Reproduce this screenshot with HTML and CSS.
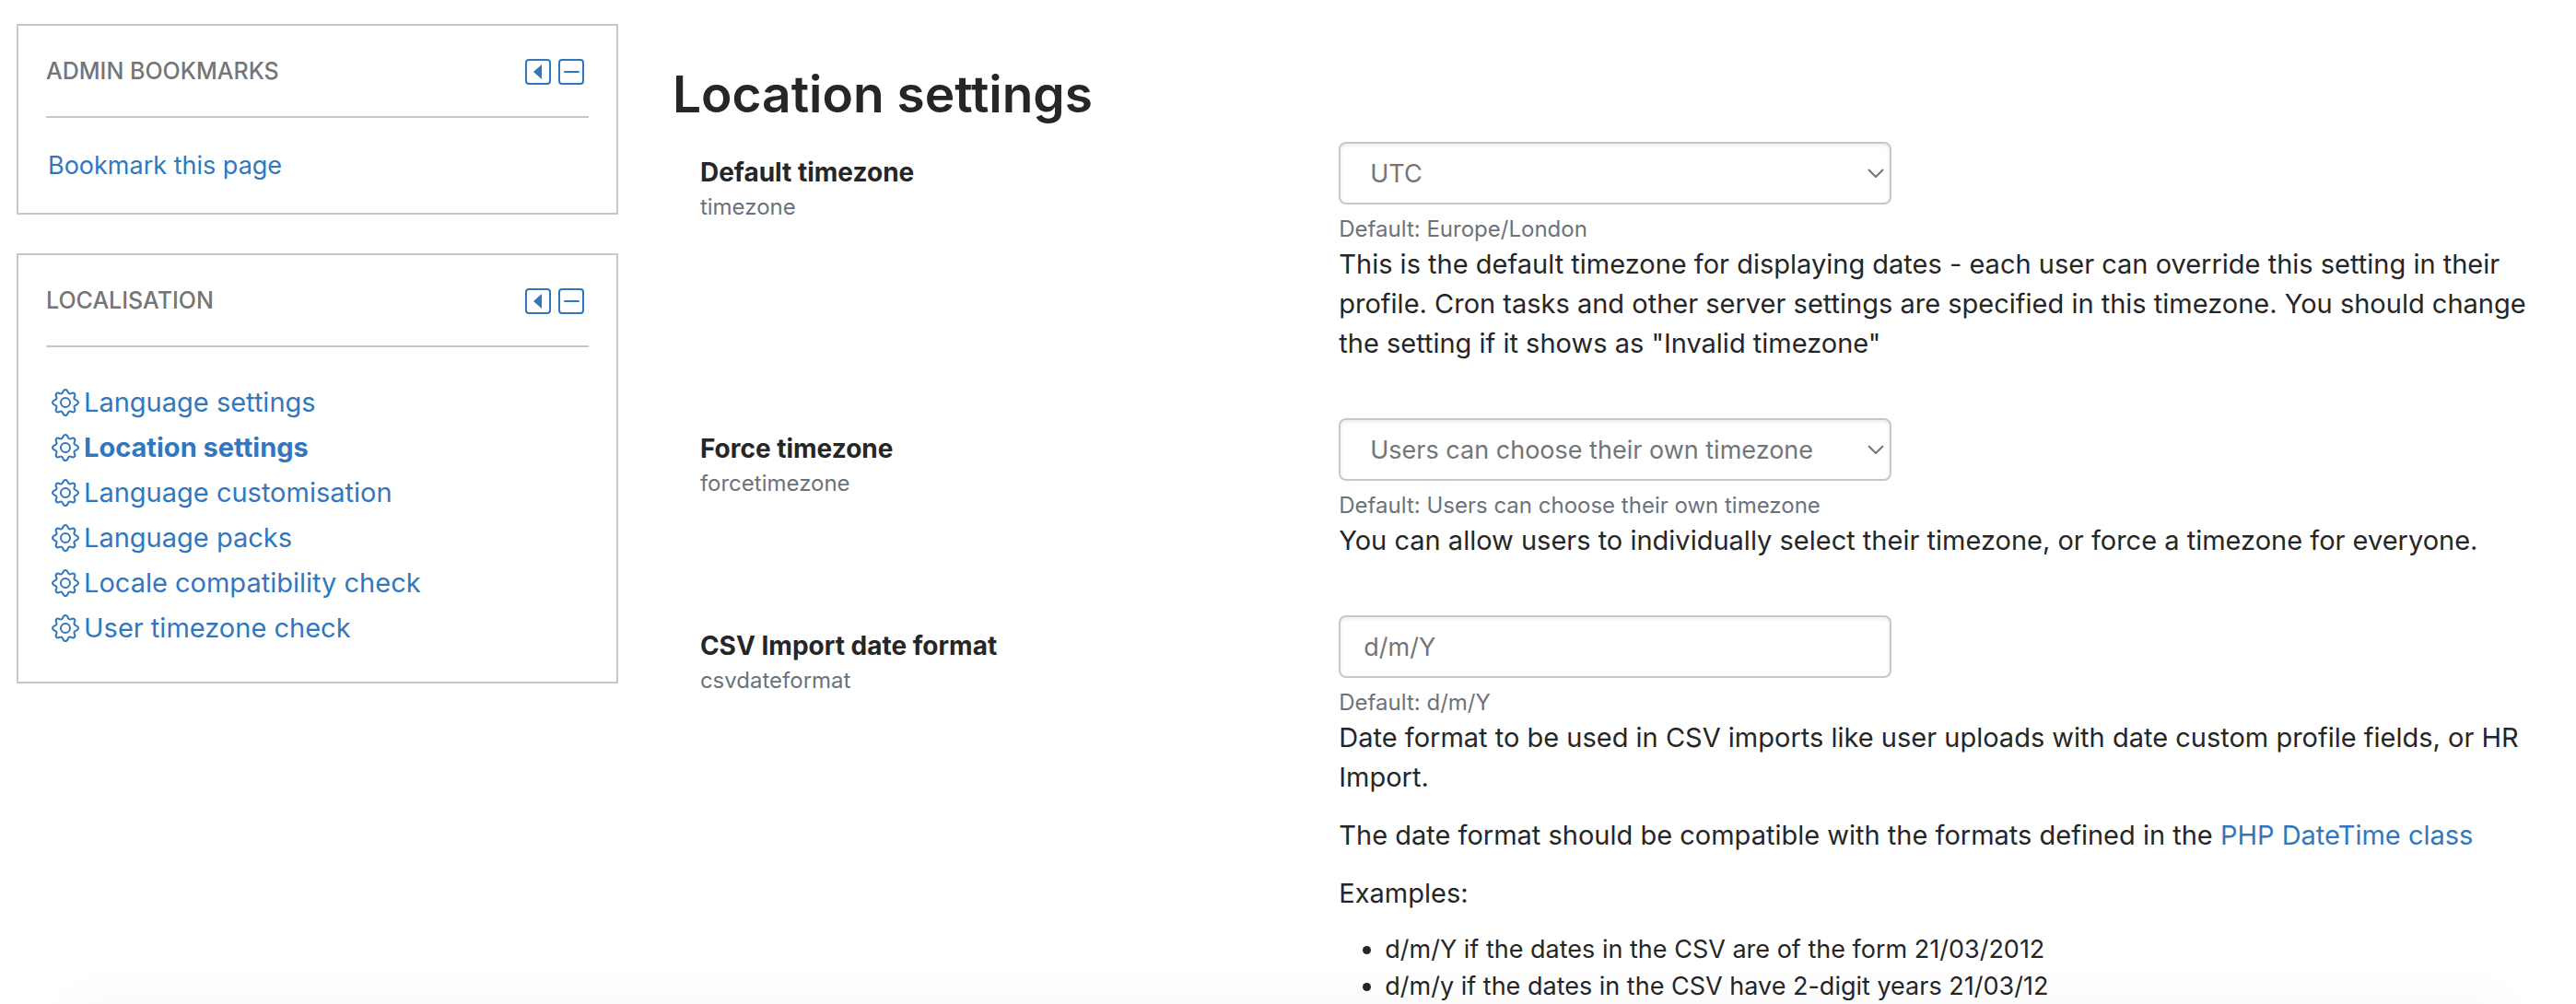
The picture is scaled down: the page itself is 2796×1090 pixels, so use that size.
FILE: index.html
```html
<!DOCTYPE html>
<html lang="en">
  <head>
    <meta charset="UTF-8" />
    <meta name="viewport" content="width=device-width, initial-scale=1.0" />
    <title>Location settings</title>
    <link rel="stylesheet" href="styles.css">
  </head>
  <body>
    <!-- shared icons -->
    <svg class="sprite" aria-hidden="true">
      <symbol id="icon-dock" viewBox="0 0 28 28">
        <rect x="1" y="1" width="26" height="26" rx="3" fill="none" stroke="currentColor" stroke-width="2" />
        <path d="M18 6v16L9 14z" fill="currentColor" />
      </symbol>
      <symbol id="icon-collapse" viewBox="0 0 28 28">
        <rect x="1" y="1" width="26" height="26" rx="3" fill="none" stroke="currentColor" stroke-width="2" />
        <path d="M7 14h15" fill="none" stroke="currentColor" stroke-width="2" stroke-linecap="round" />
      </symbol>
      <symbol id="icon-cog" viewBox="0 0 30 30">
        <g fill="none" stroke="currentColor" stroke-width="2" stroke-linejoin="round">
          <circle cx="15" cy="15" r="5" />
          <path d="M15 1C17 1 17.600 3.200 18.200 4.400C18.800 5.600 20 5.800 21.200 5.200C22.400 4.600 23.800 4.200 24.800 5.200C25.800 6.200 25.400 7.600 24.800 8.800C24.200 10 24.400 11.200 25.600 11.800C26.800 12.400 29 13 29 15C29 17 26.800 17.600 25.600 18.200C24.400 18.800 24.200 20 24.800 21.200C25.400 22.400 25.800 23.800 24.800 24.800C23.800 25.800 22.400 25.400 21.200 24.800C20 24.200 18.800 24.400 18.200 25.600C17.600 26.800 17 29 15 29C13 29 12.400 26.800 11.800 25.600C11.200 24.400 10 24.200 8.800 24.800C7.600 25.400 6.200 25.800 5.200 24.800C4.200 23.800 4.600 22.400 5.200 21.200C5.800 20 5.600 18.800 4.400 18.200C3.200 17.600 1 17 1 15C1 13 3.200 12.400 4.400 11.800C5.600 11.200 5.800 10 5.200 8.800C4.600 7.600 4.200 6.200 5.200 5.200C6.200 4.200 7.600 4.600 8.800 5.200C10 5.800 11.200 5.600 11.800 4.400C12.400 3.200 13 1 15 1Z" />
        </g>
      </symbol>
    </svg>

    <div class="page">
      <aside class="sidebar">
        <section class="block">
          <header class="block__header">
            <h2 class="block__title">Admin bookmarks</h2>
            <button class="block__btn" aria-label="Dock Admin bookmarks"><svg><use href="#icon-dock" /></svg></button>
            <button class="block__btn" aria-label="Collapse Admin bookmarks"><svg><use href="#icon-collapse" /></svg></button>
          </header>
          <a class="block__link" href="#">Bookmark this page</a>
        </section>

        <section class="block">
          <header class="block__header">
            <h2 class="block__title">Localisation</h2>
            <button class="block__btn" aria-label="Dock Localisation"><svg><use href="#icon-dock" /></svg></button>
            <button class="block__btn" aria-label="Collapse Localisation"><svg><use href="#icon-collapse" /></svg></button>
          </header>
          <ul class="tree">
            <li><a class="tree__link" href="#"><svg><use href="#icon-cog" /></svg>Language settings</a></li>
            <li><a class="tree__link tree__link--active" href="#"><svg><use href="#icon-cog" /></svg>Location settings</a></li>
            <li><a class="tree__link" href="#"><svg><use href="#icon-cog" /></svg>Language customisation</a></li>
            <li><a class="tree__link" href="#"><svg><use href="#icon-cog" /></svg>Language packs</a></li>
            <li><a class="tree__link" href="#"><svg><use href="#icon-cog" /></svg>Locale compatibility check</a></li>
            <li><a class="tree__link" href="#"><svg><use href="#icon-cog" /></svg>User timezone check</a></li>
          </ul>
        </section>
      </aside>

      <main class="main">
        <h1 class="main__title">Location settings</h1>
        <form class="settings">
          <div class="setting">
            <div class="setting__name">
              <label for="timezone">Default timezone</label>
              <span class="setting__hint">timezone</span>
            </div>
            <div class="setting__body">
              <div class="select">
                <select id="timezone" class="field field--select">
                  <option selected>UTC</option>
                  <option>Europe/London</option>
                </select>
                <svg class="select__arrow" viewBox="0 0 18 10" aria-hidden="true"><path d="M1 1l8 8 8-8" /></svg>
              </div>
              <span class="setting__hint">Default: Europe/London</span>
              <p>This is the default timezone for displaying dates - each user can override this setting in their profile. Cron tasks and other server settings are specified in this timezone. You should change the setting if it shows as "Invalid timezone"</p>
            </div>
          </div>

          <div class="setting">
            <div class="setting__name">
              <label for="forcetimezone">Force timezone</label>
              <span class="setting__hint">forcetimezone</span>
            </div>
            <div class="setting__body">
              <div class="select">
                <select id="forcetimezone" class="field field--select">
                  <option selected>Users can choose their own timezone</option>
                  <option>UTC</option>
                </select>
                <svg class="select__arrow" viewBox="0 0 18 10" aria-hidden="true"><path d="M1 1l8 8 8-8" /></svg>
              </div>
              <span class="setting__hint">Default: Users can choose their own timezone</span>
              <p>You can allow users to individually select their timezone, or force a timezone for everyone.</p>
            </div>
          </div>

          <div class="setting">
            <div class="setting__name">
              <label for="csvdateformat">CSV Import date format</label>
              <span class="setting__hint">csvdateformat</span>
            </div>
            <div class="setting__body">
              <input id="csvdateformat" class="field" type="text" value="d/m/Y" />
              <span class="setting__hint">Default: d/m/Y</span>
              <p>Date format to be used in CSV imports like user uploads with date custom profile fields, or HR Import.</p>
              <p>The date format should be compatible with the formats defined in the <a href="#">PHP DateTime class</a></p>
              <p>Examples:</p>
              <ul class="examples">
                <li>d/m/Y if the dates in the CSV are of the form 21/03/2012</li>
                <li>d/m/y if the dates in the CSV have 2-digit years 21/03/12</li>
              </ul>
            </div>
          </div>
        </form>
      </main>
    </div>
    <div class="page-shade"></div>
  </body>
</html>
```

FILE: styles.css
```css
*,
*::before,
*::after {
  box-sizing: border-box;
  padding: 0;
  margin: 0;
}

:root {
  --link: #3277bd;
  --text: #262626;
  --muted: #6a737b;
  --gray: #757575;
  --border: #c7c7c7;
}
html {
  overflow: hidden;
}
body {
  font-family: Inter, "Liberation Sans", sans-serif;
  font-size: 29px;
  line-height: 43px;
  color: var(--text);
  background-color: #fff;
  height: 100vh;
}
a {
  color: var(--link);
  text-decoration: none;
}
a:hover {
  text-decoration: underline;
}
.sprite {
  display: none;
}
.page {
  display: grid;
  grid-template-columns: 24% 1fr;
  column-gap: 50px;
  padding: 26px 20px 0 18px;
}
/* soft shade along the bottom of the window */
.page-shade {
  position: fixed;
  left: 80px;
  right: 80px;
  top: 100%;
  height: 40px;
  box-shadow: 0 0 60px rgba(0, 0, 0, 0.04);
  pointer-events: none;
}

/* sidebar blocks */
.sidebar {
  display: flex;
  flex-direction: column;
  gap: 42px;
  padding-right: 9px;
}
.block {
  border: 2px solid var(--border);
  padding: 28px 30px 30px;
}
.block__header {
  display: flex;
  align-items: center;
  gap: 8px;
  border-bottom: 2px solid var(--border);
  padding: 0 5px 27px 0;
  margin-bottom: 30px;
}
.block__title {
  flex: 1;
  color: var(--gray);
  font-size: 25px;
  font-weight: 500;
  text-transform: uppercase;
}
.block__btn {
  display: flex;
  background: none;
  border: none;
  color: var(--link);
  cursor: pointer;
}
.block__btn svg {
  width: 28px;
  height: 28px;
}
.block__link {
  display: block;
  padding-left: 2px;
  font-size: 27px;
}
.tree {
  list-style: none;
  padding: 5px 6px 4px;
}
.tree__link {
  display: flex;
  align-items: center;
  gap: 5px;
  line-height: 49px;
}
.tree__link svg {
  width: 30px;
  height: 30px;
}
.tree__link--active {
  font-weight: bold;
}

/* settings form */
.main__title {
  font-size: 55px;
  font-weight: 600;
  line-height: 72px;
  padding-top: 40px;
  margin-bottom: 16px;
}
.settings {
  display: flex;
  flex-direction: column;
  gap: 60px;
  padding-left: 30px;
}
.setting {
  display: grid;
  grid-template-columns: 1fr 2fr;
  column-gap: 32px;
}
.setting__name {
  padding-top: 12px;
}
.setting__name label {
  display: block;
  font-size: 28px;
  font-weight: bold;
}
.setting__hint {
  display: block;
  color: var(--muted);
  font-size: 24px;
  line-height: 32px;
}
.setting__body .setting__hint {
  margin-top: 11px;
}
.setting__body p + p {
  margin-top: 20px;
}
.select {
  position: relative;
  width: 600px;
  max-width: 100%;
}
.select__arrow {
  position: absolute;
  top: 29px;
  right: 8px;
  width: 18px;
  height: 10px;
  fill: none;
  stroke: var(--gray);
  stroke-width: 2;
  pointer-events: none;
}
.field {
  display: block;
  width: 600px;
  max-width: 100%;
  height: 68px;
  padding: 0 25px;
  font: inherit;
  font-size: 27px;
  color: var(--gray);
  background-color: #fff;
  border: 2px solid var(--border);
  border-radius: 8px;
  box-shadow: inset 0 2px 4px rgba(0, 0, 0, 0.08);
}
.field--select {
  appearance: none;
  padding: 0 32px;
}
.examples {
  padding-left: 50px;
  margin-top: 20px;
  font-size: 27px;
  line-height: 40px;
}
```
